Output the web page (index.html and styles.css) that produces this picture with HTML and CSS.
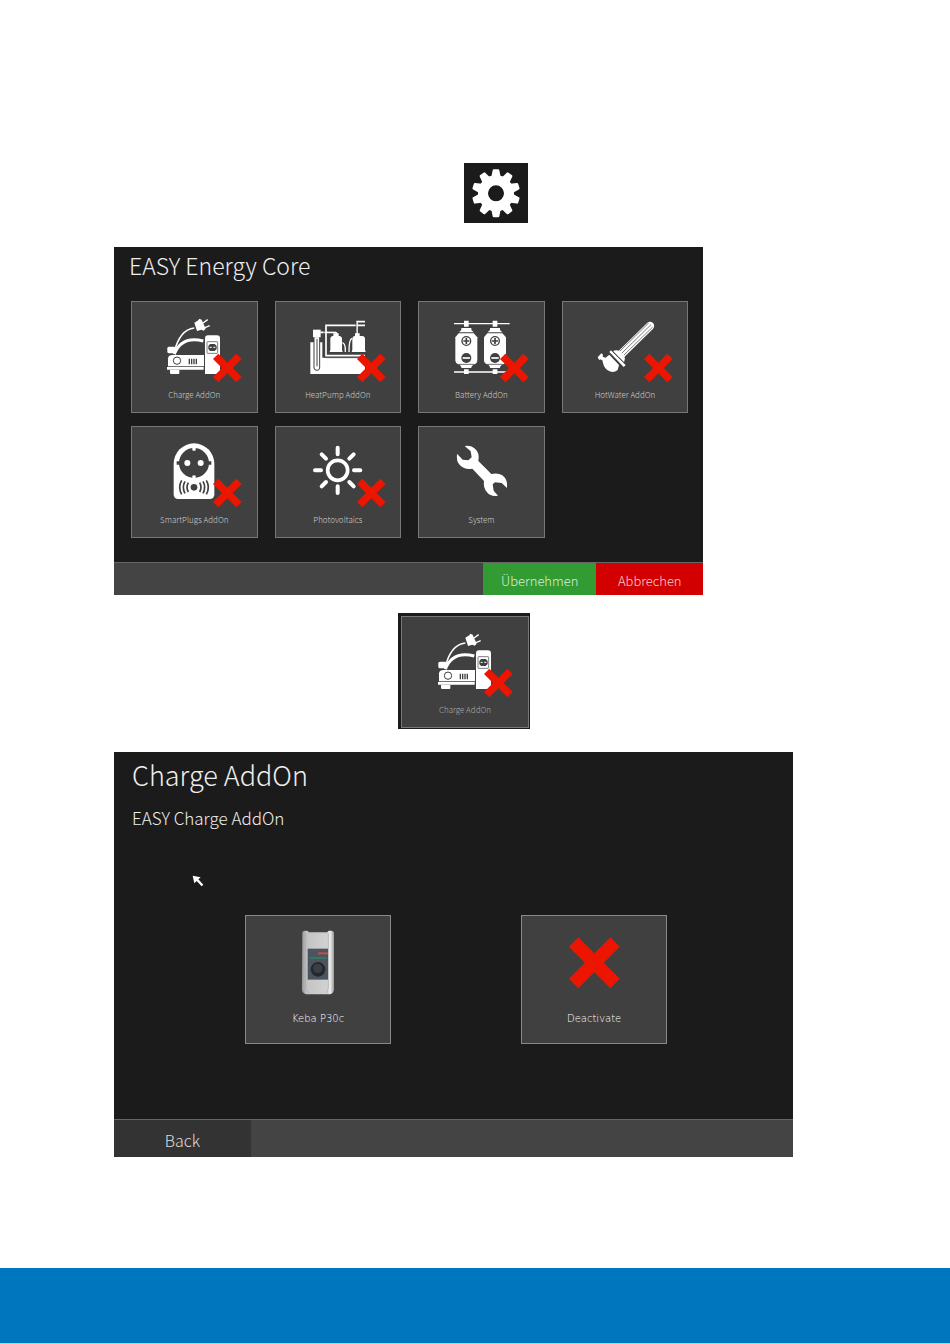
FILE: index.html
```html
<!DOCTYPE html>
<html lang="en">
<head>
    <meta charset="UTF-8">
    <meta name="viewport" content="width=device-width, initial-scale=1.0">
    <title>EASY Energy Core</title>
    <link rel="stylesheet" href="styles.css">
</head>
<body>
    <!-- shared icons -->
    <svg class="defs" aria-hidden="true">
        <symbol id="cross" viewBox="0 0 90 90">
            <path fill="#ec1500" d="M18 2 45 29 72 2 88 18 61 45 88 72 72 88 45 61 18 88 2 72 29 45 2 18Z"/>
        </symbol>
        <symbol id="charge" viewBox="60 60 300 210">
            <g fill="none" stroke="#fff">
                <path stroke-width="5" d="M150 174C158 140 174 103 211 99"/>
                <path stroke-width="9" d="M151 178C166 137 198 128 238 138"/>
                <path stroke-width="4" d="M237 84 251 74M243 98 257 92"/>
            </g>
            <g fill="#fff">
                <path d="M211 83 223 76 226 71 233 74 245 101 239 107 232 104 219 108Z"/>
                <rect x="130" y="155" width="25" height="20" rx="5"/>
                <path d="M132 214V190Q134 180 145 180H240V214Z"/>
                <path d="M129 216H239V224H129ZM138 225H166V235Q166 237 163 237H142Q138 237 138 234Z"/>
                <path d="M243 237V130Q243 121 252 121H279Q288 121 288 130V237Z"/>
            </g>
            <g fill="none" stroke="#404040" stroke-width="3">
                <circle cx="159" cy="197" r="11"/>
                <path stroke-width="4" d="M196 191V208M203 191V208M210 191V208M217 191V208"/>
                <rect x="249" y="140" width="32" height="35" rx="2" stroke-width="2"/>
            </g>
            <path fill="#404040" d="M258 147H272L278 153V162L272 168H258L253 162V153Z"/>
            <path stroke="#fff" stroke-width="3" d="M257 157H263M268 157H274"/>
        </symbol>
    </svg>

    <main class="page">
        <div class="gear-row">
            <button class="gear" aria-label="Settings">
                <svg viewBox="30 24 192 180">
                    <defs><path id="tooth" d="M112 66 116 46Q116 43 120 43H132Q136 43 136 46L140 66Z"/></defs>
                    <g fill="#fff">
                        <use href="#tooth"/>
                        <use href="#tooth" transform="rotate(36 126 115)"/>
                        <use href="#tooth" transform="rotate(72 126 115)"/>
                        <use href="#tooth" transform="rotate(108 126 115)"/>
                        <use href="#tooth" transform="rotate(144 126 115)"/>
                        <use href="#tooth" transform="rotate(180 126 115)"/>
                        <use href="#tooth" transform="rotate(216 126 115)"/>
                        <use href="#tooth" transform="rotate(252 126 115)"/>
                        <use href="#tooth" transform="rotate(288 126 115)"/>
                        <use href="#tooth" transform="rotate(324 126 115)"/>
                    </g>
                    <circle cx="126" cy="115" r="39" fill="none" stroke="#fff" stroke-width="30"/>
                </svg>
            </button>
        </div>

        <section class="panel core">
            <h1>EASY Energy Core</h1>
            <div class="tiles">
                <button class="tile">
                    <svg viewBox="60 60 300 210">
                        <use href="#charge" x="60" y="60" width="300" height="210"/>
                        <use href="#cross" x="265" y="174" width="90" height="90"/>
                    </svg>
                    <span>Charge AddOn</span>
                </button>
                <button class="tile">
                    <svg viewBox="60 60 300 210">
                        <g fill="#fff">
                            <path d="M127 142H163V188H291V237H127Z"/>
                            <path d="M135 104H158V127H135Z"/>
                            <path d="M187 132Q187 124 195 123H214Q222 124 222 132V164L224 171H185L187 164ZM253 132Q253 124 261 123H283Q291 124 291 132V164L293 171H251L253 164Z"/>
                            <path d="M196 115H212V124H196ZM261 115H275V124H261Z"/>
                        </g>
                        <g fill="none" stroke="#fff">
                            <path stroke-width="5" d="M291 91H174V182H291M157 112H200Q206 112 206 118M267 120V80H291"/>
                            <path stroke-width="4" d="M223 143Q233 145 232 171M252 130Q243 133 243 171"/>
                        </g>
                        <path fill="none" stroke="#404040" stroke-width="2" d="M168 96V184Q168 188 174 188H291M178 108H202M264 79V114"/>
                        <path fill="#fff" stroke="#404040" stroke-width="3" d="M138 127V219Q139 226 147 226Q154 226 155 219V127"/>
                        <path stroke="#404040" stroke-width="3" d="M147 132V214"/>
                        <use href="#cross" x="265" y="174" width="90" height="90"/>
                    </svg>
                    <span>HeatPump AddOn</span>
                </button>
                <button class="tile">
                    <svg viewBox="60 60 300 210">
                        <path stroke="#fff" stroke-width="4" d="M129 86H296M129 231H296"/>
                        <defs>
                            <g id="cell">
                                <path fill="#fff" d="M159 77H173V95H159ZM159 223H173V237H159ZM151 99H181V105L188 112H144L151 105ZM145 208H188L181 216V219H151V216Z"/>
                                <path fill="#fff" d="M143 115H188L199 127V195Q199 205 190 208H143Q133 205 133 195V127Z"/>
                                <circle cx="166" cy="138" r="13" fill="#fff" stroke="#404040" stroke-width="4"/>
                                <path stroke="#404040" stroke-width="5" d="M166 129V147M157 138H175"/>
                                <circle cx="166" cy="189" r="15" fill="#404040"/>
                                <path stroke="#fff" stroke-width="5" d="M155 189H177"/>
                                <path stroke="#404040" stroke-width="2" d="M144 208H188"/>
                            </g>
                        </defs>
                        <use href="#cell"/>
                        <use href="#cell" x="86"/>
                        <use href="#cross" x="265" y="174" width="90" height="90"/>
                    </svg>
                    <span>Battery AddOn</span>
                </button>
                <button class="tile">
                    <svg viewBox="60 60 300 210">
                        <g fill="none" stroke-linecap="round">
                            <path stroke="#fff" stroke-width="25" d="M200 176 285 93"/>
                            <path stroke="#404040" stroke-width="2" d="M193 170 280 85M199 176 287 90M205 182 292 97"/>
                        </g>
                        <path fill="#fff" d="M128 187 139 175 144 179 143 185 152 188 163 179 192 210 188 225Q176 235 164 229Q148 223 144 204L142 196 135 193 133 196Z"/>
                        <path fill="#fff" d="M163 171 168 166 212 210 206 216ZM174 168Q184 163 193 168L208 183Q212 192 207 202Z"/>
                        <path stroke="#404040" stroke-width="2" d="M162 176 205 218M170 167 212 208"/>
                        <use href="#cross" x="265" y="174" width="90" height="90"/>
                    </svg>
                    <span>HotWater AddOn</span>
                </button>
                <button class="tile">
                    <svg viewBox="60 60 300 210">
                        <path fill="#fff" d="M149 131A61 61 0 0 1 271 131V223Q271 237 257 237H163Q149 237 149 223Z"/>
                        <circle cx="210" cy="129" r="45" fill="#404040"/>
                        <path fill="#404040" d="M158 124H170V134H158ZM250 124H262V134H250Z"/>
                        <path fill="#fff" d="M205 83H215V91Q210 94 205 91ZM205 175H215V167Q210 164 205 167Z"/>
                        <circle cx="190" cy="129" r="9" fill="#fff"/>
                        <circle cx="230" cy="129" r="9" fill="#fff"/>
                        <circle cx="210" cy="202" r="10" fill="#404040"/>
                        <path fill="none" stroke="#404040" stroke-width="5" d="M193 188Q185 202 193 216M183 184Q173 202 183 220M173 181Q161 202 173 223M227 188Q235 202 227 216M237 184Q247 202 237 220M247 181Q259 202 247 223"/>
                        <use href="#cross" x="265" y="174" width="90" height="90"/>
                    </svg>
                    <span>SmartPlugs AddOn</span>
                </button>
                <button class="tile">
                    <svg viewBox="60 60 300 210">
                        <circle cx="209" cy="151" r="30" fill="none" stroke="#fff" stroke-width="11"/>
                        <path stroke="#fff" stroke-width="12" stroke-linecap="round" d="M209 83V103M209 199V219M141 151H159M258 151H277M161 103 174 116M257 103 244 116M161 199 174 186M257 199 244 186"/>
                        <use href="#cross" x="265" y="174" width="90" height="90"/>
                    </svg>
                    <span>Photovoltaics</span>
                </button>
                <button class="tile">
                    <svg viewBox="60 60 300 210">
                        <path fill="#fff" d="M161 78Q180 74 192 86Q207 99 202 123L241 162Q260 157 274 166Q291 179 288 204L272 189 252 187 245 193 248 212 261 227Q241 232 228 217Q216 203 219 183L184 146Q161 150 147 136Q135 124 138 101L155 119 172 121 182 112 179 94Z"/>
                    </svg>
                    <span>System</span>
                </button>
            </div>
            <div class="bar">
                <button class="apply">Übernehmen</button>
                <button class="cancel">Abbrechen</button>
            </div>
        </section>

        <div class="single-row">
            <div class="single">
                <button class="tile">
                    <svg viewBox="60 60 300 210">
                        <use href="#charge" x="60" y="60" width="300" height="210"/>
                        <use href="#cross" x="265" y="174" width="90" height="90"/>
                    </svg>
                    <span>Charge AddOn</span>
                </button>
            </div>
        </div>

        <section class="panel charge">
            <h2>Charge AddOn</h2>
            <h3>EASY Charge AddOn</h3>
            <svg class="cursor" viewBox="0 0 36 36">
                <path fill="#fff" d="M2 2 26 7 19 13 34 29 29 34 14 18 7 25Z"/>
            </svg>
            <div class="options">
                <button class="option">
                    <svg viewBox="0 0 210 210">
                        <defs>
                            <linearGradient id="shell">
                                <stop offset="0" stop-color="#999"/>
                                <stop offset="0.15" stop-color="#c4c4c4"/>
                                <stop offset="0.8" stop-color="#d2d2d2"/>
                                <stop offset="0.88" stop-color="#eee"/>
                                <stop offset="1" stop-color="#999"/>
                            </linearGradient>
                        </defs>
                        <path fill="url(#shell)" d="M58 13Q60 8 66 8H72Q76 8 77 13H133Q134 8 138 8H145Q152 8 153 14V186Q151 198 139 199H72Q59 198 57 186Z"/>
                        <path fill="none" stroke="#aaa" stroke-width="2" d="M68 16V180L77 195M136 16V180L131 195M77 14H133"/>
                        <path fill="#4a5560" d="M74 62H135V155H74Z"/>
                        <path stroke="#d04a42" stroke-width="6" d="M105 76H135"/>
                        <path stroke="#268a68" stroke-width="4" d="M80 90H132"/>
                        <circle cx="105" cy="124" r="22" fill="#24282c"/>
                        <circle cx="104" cy="121" r="14" fill="#3c3e42"/>
                    </svg>
                    <span>Keba P30c</span>
                </button>
                <button class="option">
                    <svg viewBox="0 0 210 210">
                        <use href="#cross" x="26" y="24" width="160" height="160"/>
                    </svg>
                    <span>Deactivate</span>
                </button>
            </div>
            <div class="bar">
                <button class="back">Back</button>
            </div>
        </section>
    </main>
    <footer class="footer"></footer>
</body>
</html>
```
FILE: styles.css
```css
* { box-sizing: border-box; }
body {
    margin: 0;
    min-height: 100vh;
    display: flex;
    flex-direction: column;
    background: #fff;
    font-family: "Noto Sans CJK SC", "Noto Sans", sans-serif;
    font-weight: 300;
}
button { margin: 0; padding: 0; border: 0; font: inherit; color: inherit; cursor: pointer; }
h1, h2, h3 { margin: 0; font-weight: 300; }
svg { display: block; }
.defs { position: absolute; width: 0; height: 0; }

.page { padding: 163px 16.5% 40px 12%; }
.gear-row { padding-left: 350px; }
.gear { display: block; width: 64px; height: 60px; background: #1b1b1b; }
.gear svg { width: 64px; height: 60px; }

.panel { background: #1b1b1b; color: #eee; display: flex; flex-direction: column; }
.core { margin: 24px 90px 18px 0; }
.core h1 { padding-left: 15px; font-size: 23px; line-height: 36px; }
.tiles {
    display: grid;
    grid-template-columns: repeat(4, 1fr);
    gap: 13px 17px;
    padding: 18px 15px 24px 17px;
}
.tile {
    display: flex;
    flex-direction: column;
    align-items: center;
    height: 112px;
    padding-top: 13px;
    background: #404040;
    border: 1px solid #777;
    color: #ccc;
    font-size: 8px;
    line-height: 20px;
}
.tile svg { width: 100px; height: 70px; }

.bar { display: flex; height: 33px; background: #444; border-top: 1px solid #666; font-size: 13px; }
.bar button { padding-top: 2px; }
.core .bar { justify-content: flex-end; }
.apply { width: 113px; background: #339b33; color: #d5f0d5; }
.cancel { width: 107px; background: #d20000; color: #f8d0d0; }

.single-row { padding-left: 284px; margin-bottom: 23px; }
.single { width: 132px; padding: 3px 1px 1px 3px; background: #1b1b1b; }
.single .tile { width: 100%; color: #aaa; }

.charge { position: relative; }
.charge h2 { padding-left: 18px; font-size: 27px; line-height: 46px; }
.charge h3 { padding-left: 18px; font-size: 17px; line-height: 40px; }
.cursor { position: absolute; left: 78px; top: 123px; width: 12px; height: 12px; }
.options { display: flex; justify-content: center; gap: 130px; padding: 77px 0 75px 5px; }
.option {
    display: flex;
    flex-direction: column;
    align-items: center;
    width: 146px;
    height: 129px;
    padding-top: 12px;
    background: #404040;
    border: 1px solid #888;
    color: #fff;
    font-family: "DejaVu Sans", sans-serif;
    font-size: 10px;
    line-height: 42px;
}
.option svg { width: 70px; height: 70px; }
.charge .bar { height: 38px; font-size: 16px; }
.back { width: 137px; background: #333; color: #ddd; }

.footer { margin-top: auto; height: 76px; background: #0076be; border-bottom: 1px solid #b0d4ec; }
```
